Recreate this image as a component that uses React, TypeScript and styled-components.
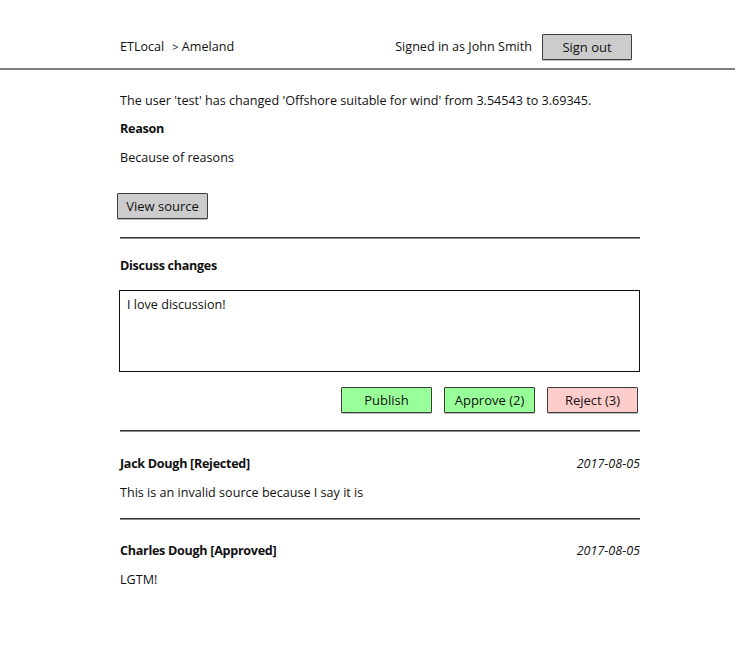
import React from "react";
import styled, { createGlobalStyle } from "styled-components";

const Global = createGlobalStyle`
  html, body { margin: 0; padding: 0; background: #fff; }
  body {
    font-family: "Open Sans", "DejaVu Sans", sans-serif;
    font-size: 12.6px;
    color: #111;
  }
  * { box-sizing: border-box; }
`;

const Page = styled.div`
  width: 735px;
  min-height: 656px;
  background: #fff;
`;

const Header = styled.header`
  height: 70px;
  padding: 25px 103px 0 120px;
  border-bottom: 2px solid #808080;
  display: flex;
  align-items: center;
  justify-content: space-between;
`;

const Crumbs = styled.div`
  display: flex;
  gap: 8px;
  line-height: 18px;
`;

const Chevron = styled.span`
  font-size: 11px;
`;

const UserBox = styled.div`
  display: flex;
  align-items: center;
  gap: 10px;
  line-height: 18px;
`;

const Button = styled.button<{ $tone?: "gray" | "green" | "red"; $w?: number }>`
  font: inherit;
  font-size: 13px;
  color: #111;
  width: ${(p) => p.$w ?? 91}px;
  height: 26px;
  padding: 0;
  border: 1px solid #3c3c3c;
  border-radius: 1px;
  box-shadow: 0 1px 0 rgba(0, 0, 0, 0.25);
  background: ${(p) =>
    p.$tone === "green" ? "#99ff99" : p.$tone === "red" ? "#ffcccc" : "#cccccc"};
  cursor: pointer;
`;

const Main = styled.main`
  padding: 0 95px 0 120px;
  display: flex;
  flex-direction: column;
`;

const Text = styled.p<{ $mt: number; $bold?: boolean }>`
  margin: ${(p) => p.$mt}px 0 0;
  height: 18px;
  padding-top: 1px;
  line-height: 18px;
  font-weight: ${(p) => (p.$bold ? 700 : 400)};
  letter-spacing: ${(p) => (p.$bold ? "-0.3px" : "0")};
`;

const SourceButton = styled(Button)`
  margin: 27px 0 0 -3px;
  align-self: flex-start;
`;

const Divider = styled.hr<{ $mt: number }>`
  margin: ${(p) => p.$mt}px 0 0;
  border: none;
  height: 2px;
  background: linear-gradient(180deg, #3a3a3a 0 1px, #8a8a8a 1px 2px);
`;

const TextArea = styled.div`
  margin-top: 16px;
  width: 521px;
  margin-left: -1px;
  height: 82px;
  border: 1px solid #111;
  padding: 5px 7px;
  line-height: 18px;
`;

const Actions = styled.div`
  margin-top: 15px;
  display: flex;
  justify-content: flex-end;
  gap: 12px;
  padding-right: 2px;
`;

const CommentHead = styled.div<{ $mt: number }>`
  margin-top: ${(p) => p.$mt}px;
  height: 18px;
  padding-top: 2px;
  display: flex;
  justify-content: space-between;
  line-height: 18px;
`;

const Author = styled.span`
  font-weight: 700;
  letter-spacing: -0.3px;
`;

const DateText = styled.span`
  font-style: italic;
`;

const comments = [
  { author: "Jack Dough [Rejected]", date: "2017-08-05", body: "This is an invalid source because I say it is" },
  { author: "Charles Dough [Approved]", date: "2017-08-05", body: "LGTM!" },
];

export default function App() {
  return (
    <Page>
      <Global />
      <Header>
        <Crumbs>
          <span>ETLocal</span>
          <span>
            <Chevron>&gt;</Chevron> Ameland
          </span>
        </Crumbs>
        <UserBox>
          <span>Signed in as John Smith</span>
          <Button $w={90}>Sign out</Button>
        </UserBox>
      </Header>
      <Main>
        <Text $mt={21}>
          The user 'test' has changed 'Offshore suitable for wind' from 3.54543 to 3.69345.
        </Text>
        <Text $mt={10} $bold>
          Reason
        </Text>
        <Text $mt={11}>Because of reasons</Text>
        <SourceButton>View source</SourceButton>
        <Divider $mt={18} />
        <Text $mt={17} $bold>
          Discuss changes
        </Text>
        <TextArea>I love discussion!</TextArea>
        <Actions>
          <Button $tone="green">Publish</Button>
          <Button $tone="green">Approve (2)</Button>
          <Button $tone="red">Reject (3)</Button>
        </Actions>
        {comments.map((c, i) => (
          <React.Fragment key={i}>
            <Divider $mt={17} />
            <CommentHead $mt={i === 0 ? 21 : 20}>
              <Author>{c.author}</Author>
              <DateText>{c.date}</DateText>
            </CommentHead>
            <Text $mt={12}>{c.body}</Text>
          </React.Fragment>
        ))}
      </Main>
    </Page>
  );
}
